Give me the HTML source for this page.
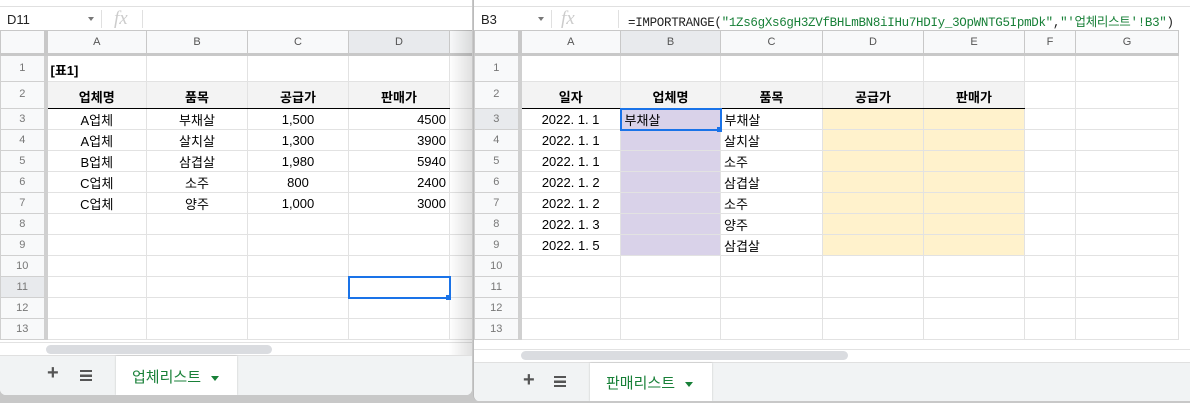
<!DOCTYPE html>
<html><head><meta charset="utf-8"><style>
*{margin:0;padding:0;box-sizing:border-box}
body{width:1190px;height:403px;overflow:hidden;background:#c8c8c8;font-family:"Liberation Sans","Noto Sans CJK KR",sans-serif;font-size:13px;color:#000;position:relative}
.win{position:absolute;background:#fff;overflow:hidden}
.fb{position:absolute;left:0;right:0;top:6px;height:24px;border-top:1px solid #e0e0e0;background:#fff}
.nb{position:absolute;left:7px;top:5px;font-size:13px;color:#222}
.dd{position:absolute;top:10px;width:0;height:0;border-left:3px solid transparent;border-right:3px solid transparent;border-top:4px solid #777}
.sep{position:absolute;top:3px;width:1px;height:18px;background:#e0e0e0}
.fx{position:absolute;top:1px;font-family:"Liberation Serif",serif;font-style:italic;font-size:19px;color:#ccc}
table{position:absolute;border-collapse:collapse;table-layout:fixed}
td{border:1px solid #e2e2e2;height:21px;padding:0 3px;white-space:nowrap;overflow:hidden;font-size:13px}
tr.h td{height:24px;background:#f8f9fa;color:#555;font-size:11px;text-align:center;border-bottom:3px solid #c8c8c8;border-color:#c8c8c8}
td.rh{background:#f8f9fa;color:#777;font-size:11px;text-align:center;border-right:4px solid #c8c8c8;border-color:#d0d0d0}
tr.r1 td{height:27px;vertical-align:bottom;padding-bottom:2px}
tr.r2 td{height:27px;vertical-align:bottom;padding-bottom:2px}
tr.r2 td.t{background:#f3f3f3;font-weight:bold;text-align:center;border-top:1px solid #000;border-bottom:1px solid #000}
.c{text-align:center}.r{text-align:right}
.p{background:#d9d2e9}.y{background:#fff2cc}
.sel{background:#e8eaed !important}
.tabbar{position:absolute;left:0;right:0;background:#f1f3f4;border-top:1px solid #e0e0e0}
.tab{position:absolute;top:0;bottom:0;background:#fff;color:#188038;font-size:15px;box-shadow:0 0 2px rgba(0,0,0,.2)}
.plus{position:absolute;font-size:20px;color:#555;font-weight:bold}
.menu{position:absolute;width:12px;height:11px;border-top:2px solid #555;border-bottom:2px solid #555}
.menu:after{content:"";position:absolute;left:0;right:0;top:2.5px;height:2px;background:#555;box-shadow:0 -0.5px 0 #555}
.tri{display:inline-block;width:0;height:0;border-left:4px solid transparent;border-right:4px solid transparent;border-top:5px solid #188038;vertical-align:middle;margin-left:10px}
.sb{position:absolute;height:9px;border-radius:5px;background:#dadce0}
</style></head><body>

<div class="win" style="left:0;top:0;width:472px;height:395px;border-radius:0 0 6px 6px">
 <div class="fb"><span class="nb">D11</span><span class="dd" style="left:88px"></span><span class="sep" style="left:101px"></span><span class="fx" style="left:114px">fx</span><span class="sep" style="left:142px"></span></div>
 <table style="left:0;top:30px;width:472px">
  <colgroup><col style="width:45px"><col style="width:101px"><col style="width:101px"><col style="width:101px"><col style="width:101px"><col style="width:23px"></colgroup>
  <tr class="h"><td style="border-right:4px solid #c8c8c8"></td><td>A</td><td>B</td><td>C</td><td class="sel">D</td><td></td></tr>
  <tr class="r1"><td class="rh" style="vertical-align:middle">1</td><td style="font-weight:bold">[표1]</td><td></td><td></td><td></td><td></td></tr>
  <tr class="r2"><td class="rh" style="vertical-align:middle">2</td><td class="t">업체명</td><td class="t">품목</td><td class="t">공급가</td><td class="t">판매가</td><td></td></tr>
  <tr><td class="rh">3</td><td class="c">A업체</td><td class="c">부채살</td><td class="c">1,500</td><td class="r">4500</td><td></td></tr>
  <tr><td class="rh">4</td><td class="c">A업체</td><td class="c">살치살</td><td class="c">1,300</td><td class="r">3900</td><td></td></tr>
  <tr><td class="rh">5</td><td class="c">B업체</td><td class="c">삼겹살</td><td class="c">1,980</td><td class="r">5940</td><td></td></tr>
  <tr><td class="rh">6</td><td class="c">C업체</td><td class="c">소주</td><td class="c">800</td><td class="r">2400</td><td></td></tr>
  <tr><td class="rh">7</td><td class="c">C업체</td><td class="c">양주</td><td class="c">1,000</td><td class="r">3000</td><td></td></tr>
  <tr><td class="rh">8</td><td></td><td></td><td></td><td></td><td></td></tr>
  <tr><td class="rh">9</td><td></td><td></td><td></td><td></td><td></td></tr>
  <tr><td class="rh">10</td><td></td><td></td><td></td><td></td><td></td></tr>
  <tr><td class="rh sel">11</td><td></td><td></td><td></td><td style="border:2px solid #1a73e8"></td><td></td></tr>
  <tr><td class="rh">12</td><td></td><td></td><td></td><td></td><td></td></tr>
  <tr><td class="rh">13</td><td></td><td></td><td></td><td></td><td></td></tr>
 </table>
 <div style="position:absolute;left:446px;top:295px;width:5px;height:5px;background:#1a73e8"></div>
 <div style="position:absolute;left:0;top:342px;width:472px;height:13px;background:#fff;border-top:1px solid #e2e2e2"></div>
 <div class="sb" style="left:46px;top:345px;width:226px"></div>
 <div class="tabbar" style="top:355px;height:40px">
  <span class="plus" style="left:47px;top:6px">+</span>
  <span class="menu" style="left:80px;top:14px"></span>
  <div class="tab" style="left:116px;width:121px;padding:10px 0 0 16px">업체리스트<span class="tri"></span></div>
 </div>
 <div style="position:absolute;left:449px;top:30px;width:23px;height:325px;background:linear-gradient(to right,rgba(0,0,0,0),rgba(0,0,0,.12))"></div>
</div>

<div class="win" style="left:473px;top:0;width:717px;height:401px;border-left:1px solid #bbb;border-radius:0 0 0 6px">
 <div class="fb"><span class="nb">B3</span><span class="dd" style="left:64px"></span><span class="sep" style="left:77px"></span><span class="fx" style="left:87px">fx</span><span class="sep" style="left:144px"></span>
 <span style="position:absolute;left:154px;top:4px;font-family:'Liberation Mono','Noto Sans CJK KR',monospace;font-size:12.5px;letter-spacing:-0.3px;color:#222">=IMPORTRANGE(<span style="color:#188038">"1Zs6gXs6gH3ZVfBHLmBN8iIHu7HDIy_3OpWNTG5IpmDk"</span>,<span style="color:#188038">"'업체리스트'!B3"</span>)</span></div>
 <table style="left:0;top:30px;width:704px">
  <colgroup><col style="width:45px"><col style="width:101px"><col style="width:100px"><col style="width:102px"><col style="width:101px"><col style="width:101px"><col style="width:51px"><col style="width:103px"></colgroup>
  <tr class="h"><td style="border-right:4px solid #c8c8c8"></td><td>A</td><td class="sel">B</td><td>C</td><td>D</td><td>E</td><td>F</td><td>G</td></tr>
  <tr class="r1"><td class="rh" style="vertical-align:middle">1</td><td></td><td></td><td></td><td></td><td></td><td></td><td></td></tr>
  <tr class="r2"><td class="rh" style="vertical-align:middle">2</td><td class="t">일자</td><td class="t">업체명</td><td class="t">품목</td><td class="t">공급가</td><td class="t">판매가</td><td></td><td></td></tr>
  <tr><td class="rh sel">3</td><td class="c">2022. 1. 1</td><td class="p" style="border:2px solid #1a73e8">부채살</td><td>부채살</td><td class="y"></td><td class="y"></td><td></td><td></td></tr>
  <tr><td class="rh">4</td><td class="c">2022. 1. 1</td><td class="p"></td><td>살치살</td><td class="y"></td><td class="y"></td><td></td><td></td></tr>
  <tr><td class="rh">5</td><td class="c">2022. 1. 1</td><td class="p"></td><td>소주</td><td class="y"></td><td class="y"></td><td></td><td></td></tr>
  <tr><td class="rh">6</td><td class="c">2022. 1. 2</td><td class="p"></td><td>삼겹살</td><td class="y"></td><td class="y"></td><td></td><td></td></tr>
  <tr><td class="rh">7</td><td class="c">2022. 1. 2</td><td class="p"></td><td>소주</td><td class="y"></td><td class="y"></td><td></td><td></td></tr>
  <tr><td class="rh">8</td><td class="c">2022. 1. 3</td><td class="p"></td><td>양주</td><td class="y"></td><td class="y"></td><td></td><td></td></tr>
  <tr><td class="rh">9</td><td class="c">2022. 1. 5</td><td class="p"></td><td>삼겹살</td><td class="y"></td><td class="y"></td><td></td><td></td></tr>
  <tr><td class="rh">10</td><td></td><td></td><td></td><td></td><td></td><td></td><td></td></tr>
  <tr><td class="rh">11</td><td></td><td></td><td></td><td></td><td></td><td></td><td></td></tr>
  <tr><td class="rh">12</td><td></td><td></td><td></td><td></td><td></td><td></td><td></td></tr>
  <tr><td class="rh">13</td><td></td><td></td><td></td><td></td><td></td><td></td><td></td></tr>
 </table>
 <div style="position:absolute;left:243px;top:127px;width:5px;height:5px;background:#1a73e8"></div>
 <div style="position:absolute;left:0;top:349px;width:717px;height:13px;background:#fff;border-top:1px solid #e2e2e2"></div>
 <div class="sb" style="left:47px;top:351px;width:327px"></div>
 <div class="tabbar" style="top:362px;height:39px">
  <span class="plus" style="left:49px;top:6px">+</span>
  <span class="menu" style="left:80px;top:13px"></span>
  <div class="tab" style="left:116px;width:122px;padding:9px 0 0 16px">판매리스트<span class="tri"></span></div>
 </div>
</div>
</body></html>
